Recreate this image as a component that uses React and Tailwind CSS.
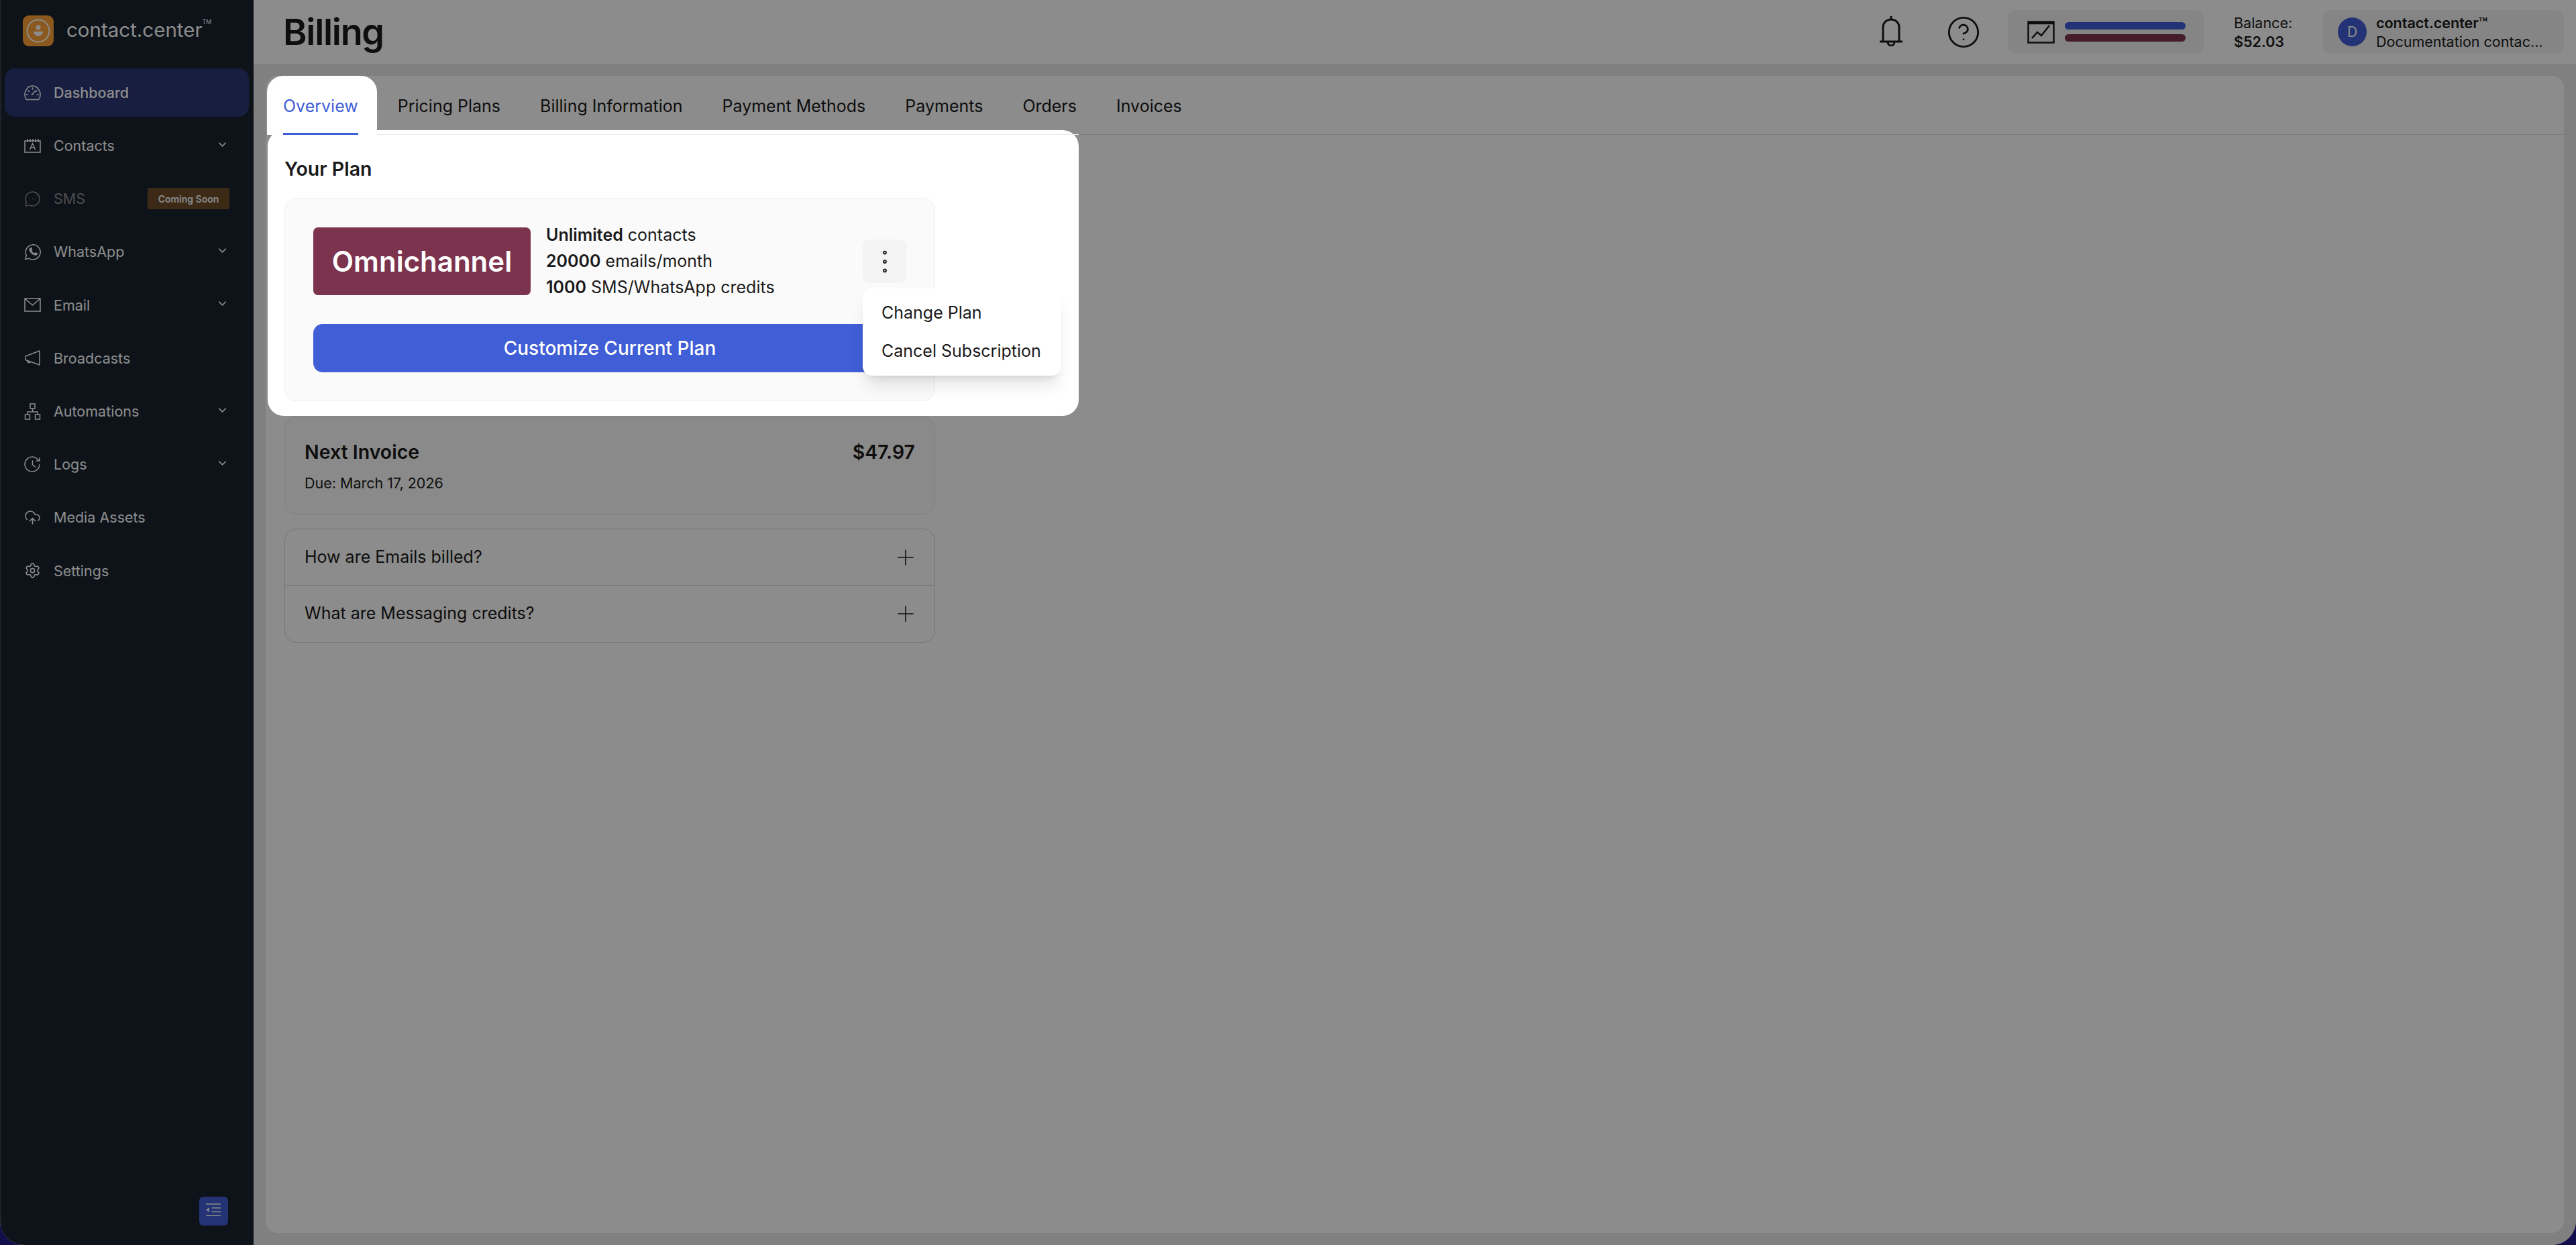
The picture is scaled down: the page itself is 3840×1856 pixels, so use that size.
import React from 'react';
import { ChevronDown, CircleHelp, CloudUpload, EllipsisVertical, MessageCircleMore, Plus, Settings } from 'lucide-react';

const GaugeIcon = (props) => (
  <svg viewBox="0 0 25 25" fill="none" stroke="currentColor" strokeWidth="1.4" strokeLinecap="round" {...props}>
    <path d="M3.500 22.500C-3 14 4 2 12.500 2S28 14 21.500 22.500z" />
    <path d="M12.500 5v2M6 9l1.500 1.500M19 9l-1.500 1.500M3.500 15h2M19.500 15h2M11.500 15.500l5-6" />
  </svg>
);

const ContactsIcon = (props) => (
  <svg viewBox="0 0 25 25" fill="none" stroke="currentColor" strokeWidth="1.4" {...props}>
    <path d="M1 5h23v17H1zM5 2v5M9 2v5M13 2v5M17 2v5M21 2v5" />
    <path d="M8.500 18l4-9 4 9M10 15h5" />
  </svg>
);

const WhatsappIcon = (props) => (
  <svg viewBox="0 0 25 25" fill="none" stroke="currentColor" strokeWidth="1.4" strokeLinejoin="round" {...props}>
    <path d="M1.500 23.500l1.800-5.800A11 11 0 1 1 7.500 22.300z" />
    <path fill="currentColor" stroke="none" d="M9 7c-.6 0-1.500.8-1.500 2.200 0 1.500 1 3 1.500 3.600.500.700 2.200 3.200 5 4.300 2.300.9 3.300.7 4 .5.800-.2 1.800-1 2-2 .1-.7.1-1 0-1.200l-3-1.500-1.500 1.600c-1-.3-3.300-2-4.300-4l1.200-1.500-1.400-3c-.2-.5-.5-.6-1-.6z" />
  </svg>
);

const MailIcon = (props) => (
  <svg viewBox="0 0 25 25" fill="none" stroke="currentColor" strokeWidth="1.4" {...props}>
    <path d="M1 3h23v19H1zM1 3l11.500 10L24 3" />
  </svg>
);

const MegaphoneIcon = (props) => (
  <svg viewBox="0 0 25 25" fill="none" stroke="currentColor" strokeWidth="1.4" strokeLinejoin="round" {...props}>
    <path d="M23 2v21L2 15.500v-5.500zM5 16.500c-.5 3 3.500 4.500 5 1.500" />
  </svg>
);

const FlowIcon = (props) => (
  <svg viewBox="0 0 25 25" fill="none" stroke="currentColor" strokeWidth="1.4" {...props}>
    <path d="M9 1h7v7H9zM1.500 17h7v7h-7zM16.500 17h7v7h-7zM12.500 8v5M5 17v-4h15v4" />
  </svg>
);

const LogsIcon = (props) => (
  <svg viewBox="0 0 25 25" fill="none" stroke="currentColor" strokeWidth="1.500" strokeLinecap="round" strokeLinejoin="round" {...props}>
    <path d="M23 12.500A11 11 0 1 1 19.500 4L23 7M23 2.500V7h-4.500M12.500 7v6l4 3" />
  </svg>
);

const BellIcon = (props) => (
  <svg viewBox="0 0 36 46" fill="none" stroke="currentColor" strokeWidth="3" {...props}>
    <path d="M6 39V18c0-7 5-12 12-12s12 5 12 12v21M1 39h34M18 1v5M13 39c0 8 10 8 10 0" />
  </svg>
);

const ChartIcon = (props) => (
  <svg viewBox="0 0 41 34" fill="none" stroke="currentColor" strokeWidth="2.500" {...props}>
    <path d="M1.500 1.500h38v31h-38zM1 4h39" />
    <path d="M7 26l8-9 6 5 12-15" />
  </svg>
);

const CollapseIcon = (props) => (
  <svg viewBox="0 0 24 24" stroke="currentColor" strokeWidth="1.700" fill="none" {...props}>
    <path d="M0 1h23M9 7h14M9 13h14M0 19h23" />
    <path d="M0 10l5-3.500v7z" fill="currentColor" stroke="none" />
  </svg>
);

const Logo = () => (
  <div className="flex h-[46px] w-[46px] items-center justify-center rounded-[9px] bg-[#fda336]">
    <svg viewBox="0 0 36 36" className="h-[36px] w-[36px] text-white" fill="none">
      <circle cx="18" cy="18" r="16.500" stroke="currentColor" strokeWidth="2" />
      <circle cx="18" cy="13" r="3.500" fill="currentColor" />
      <path d="M11 19h14c0 9-14 9-14 0z" fill="currentColor" />
    </svg>
  </div>
);

const navItems = [
  { label: 'Dashboard', icon: GaugeIcon, active: true },
  { label: 'Contacts', icon: ContactsIcon, caret: true },
  { label: 'SMS', icon: MessageCircleMore, soon: true },
  { label: 'WhatsApp', icon: WhatsappIcon, caret: true },
  { label: 'Email', icon: MailIcon, caret: true },
  { label: 'Broadcasts', icon: MegaphoneIcon },
  { label: 'Automations', icon: FlowIcon, caret: true },
  { label: 'Logs', icon: LogsIcon, caret: true },
  { label: 'Media Assets', icon: CloudUpload },
  { label: 'Settings', icon: Settings },
];

const NavRow = ({ item }) => {
  const Icon = item.icon;
  return (
    <div className={`flex h-[72px] items-center rounded-[15px] pl-[29px] text-[21.5px] ${item.active ? 'bg-[#2a3873] font-medium' : ''} ${item.soon ? 'text-[#8c8c8c]' : 'text-white'}`}>
      <Icon className="h-[25px] w-[25px] shrink-0" strokeWidth={1.5} />
      <span className="ml-[19px]">{item.label}</span>
      {item.caret && <ChevronDown className="ml-auto mr-[30px] h-[19px] w-[19px] -translate-y-[2px]" strokeWidth={2} />}
      {item.soon && (
        <span className="ml-auto mr-[29px] flex h-[32px] w-[122px] items-center justify-center rounded-[3px] bg-[#6d4e2b] text-[14px] font-semibold text-white">
          Coming Soon
        </span>
      )}
    </div>
  );
};

const Sidebar = () => (
  <aside className="flex h-full w-[378px] shrink-0 flex-col border-l-2 border-[#3a3f47] bg-[#19232f]">
    <div className="flex h-[102px] shrink-0 items-start pl-[32px] pt-[23px]">
      <Logo />
      <span className="ml-[19px] mt-[3px] text-[29.5px] leading-[36px] text-white">contact.center</span>
      <span className="mt-[4px] text-[9px] leading-[12px] text-white">TM</span>
    </div>
    <nav className="flex flex-col gap-[7.2px] pl-[5px] pr-[7px]">
      {navItems.map((item) => (
        <NavRow key={item.label} item={item} />
      ))}
    </nav>
    <button className="mb-[29px] mr-[38px] mt-auto flex h-[43px] w-[43px] items-center justify-center self-end rounded-[6px] bg-[#405ed5] text-white">
      <CollapseIcon className="h-[23px] w-[23px]" />
    </button>
  </aside>
);

const Header = () => (
  <header className="flex h-[95px] shrink-0 items-center bg-white pl-[44px] pr-[18px] text-[#1a1a1a]">
    <h1 className="text-[54px] font-semibold leading-none tracking-[-1.3px]">Billing</h1>
    <BellIcon className="ml-auto h-[46px] w-[36px] -translate-y-[2px]" />
    <CircleHelp className="ml-[64px] h-[52px] w-[52px]" strokeWidth={1.300} />
    <div className="ml-[40px] flex h-[65px] w-[292px] items-center rounded-[12px] bg-[#f2f2f2] pl-[29px]">
      <ChartIcon className="h-[34px] w-[41px]" />
      <div className="ml-[15px] flex flex-col gap-[7px]">
        <div className="h-[11px] w-[180px] rounded-full bg-[#405ed5]" />
        <div className="h-[11px] w-[180px] rounded-full bg-[#7c334d]" />
      </div>
    </div>
    <div className="ml-[45px] w-[132px] text-[21.5px] leading-[28px]">
      <div>Balance:</div>
      <div className="font-semibold">$52.03</div>
    </div>
    <div className="flex h-[65px] w-[360px] items-center rounded-[12px] bg-[#f2f2f2] pl-[23px]">
      <div className="flex h-[43px] w-[43px] items-center justify-center rounded-full bg-[#405ed5] text-[21px] text-white">D</div>
      <div className="ml-[14px] text-[21.5px] leading-[28px]">
        <div className="font-semibold">contact.center™</div>
        <div>Documentation contac...</div>
      </div>
    </div>
  </header>
);

const Tabs = () => (
  <div className="flex h-[88px] border-b border-[#e2e2e2] pl-[26px] text-[25px] text-[#1a1a1a]">
    <div className="relative z-30 -ml-[24px] mr-[31px] flex h-[88px] flex-col rounded-t-[24px] bg-white pl-[24px] pr-[28px]">
      <span className="mt-[28px] leading-[34px] text-[#405ed5]">Overview</span>
      <span className="mt-auto h-[3px] w-full bg-[#405ed5]" />
    </div>
    <div className="flex gap-[59px] pt-[28px] leading-[34px]">
      <span>Pricing Plans</span>
      <span>Billing Information</span>
      <span>Payment Methods</span>
      <span>Payments</span>
      <span>Orders</span>
      <span>Invoices</span>
    </div>
  </div>
);

const PlanSection = () => (
  <section className="relative z-20 -mt-[7px] ml-[3px] h-[426px] w-[1209px] rounded-[24px] bg-white px-[25px] pt-[40px] text-[#1a1a1a]">
    <div className="absolute left-0 right-0 top-[6px] h-[1px] bg-[#ececec]" />
    <h2 className="text-[28.5px] font-semibold leading-[36px]">Your Plan</h2>
    <div className="relative mt-[25px] w-[970px] rounded-[18px] border border-[#f0f0f0] bg-[#fafafa] px-[42px] pb-[42px] pt-[35px]">
      <div className="flex items-center">
        <div className="flex h-[101px] w-[324px] items-center justify-center rounded-[7px] bg-[#7c334d] text-[42px] font-semibold text-white">
          Omnichannel
        </div>
        <div className="ml-[23px] text-[25px] leading-[39px]">
          <div><b className="font-semibold">Unlimited</b> contacts</div>
          <div><b className="font-semibold">20000</b> emails/month</div>
          <div><b className="font-semibold">1000</b> SMS/WhatsApp credits</div>
        </div>
        <div className="relative ml-auto">
          <button className="flex h-[65px] w-[65px] items-center justify-center rounded-[10px] bg-[#f3f3f3]">
            <EllipsisVertical className="h-[46px] w-[46px]" strokeWidth={1} />
          </button>
          <div className="absolute left-0 top-[73px] z-10 w-[296px] rounded-[14px] bg-white py-[8px] pl-[28px] text-[25px] shadow-xl">
            <div className="flex h-[57px] items-center">Change Plan</div>
            <div className="flex h-[57px] items-center">Cancel Subscription</div>
          </div>
        </div>
      </div>
      <button className="mt-[35px] h-[72px] w-full rounded-[14px] bg-[#405ed5] text-[28px] font-medium text-white">
        Customize Current Plan
      </button>
    </div>
  </section>
);

const LowerCards = () => (
  <div className="ml-[28px] mt-[1px] w-[970px] text-[#1a1a1a]">
    <div className="h-[146px] rounded-[18px] border border-[#e8e8e8] bg-[#fbfbfb] px-[29px] pt-[34px]">
      <div className="flex items-center justify-between text-[28.5px] font-semibold leading-[36px]">
        <span>Next Invoice</span>
        <span>$47.97</span>
      </div>
      <div className="mt-[14px] text-[21.5px] leading-[28px]">Due: March 17, 2026</div>
    </div>
    <div className="mt-[21px] rounded-[18px] border border-[#d4d4d4] text-[25px]">
      <div className="flex h-[84px] items-center justify-between border-b border-[#d4d4d4] pl-[29px] pr-[24px]">
        <span>How are Emails billed?</span>
        <Plus className="h-[38px] w-[38px]" strokeWidth={1} />
      </div>
      <div className="flex h-[84px] items-center justify-between pl-[29px] pr-[24px]">
        <span>What are Messaging credits?</span>
        <Plus className="h-[38px] w-[38px]" strokeWidth={1} />
      </div>
    </div>
  </div>
);

export default function App() {
  return (
    <div className="h-[1856px] w-[3840px] bg-[#120e4c] font-[family-name:Inter,sans-serif]">
      <div className="relative flex h-full overflow-hidden rounded-b-[36px] bg-[#e9e9e9]">
        <Sidebar />
        <main className="flex min-w-0 flex-1 flex-col">
          <Header />
          <div className="mx-[18px] mt-[18px] h-[1725px] rounded-[18px] bg-white">
            <Tabs />
            <PlanSection />
            <LowerCards />
          </div>
        </main>
        <div className="absolute inset-0 z-10 bg-black/45" />
      </div>
    </div>
  );
}
